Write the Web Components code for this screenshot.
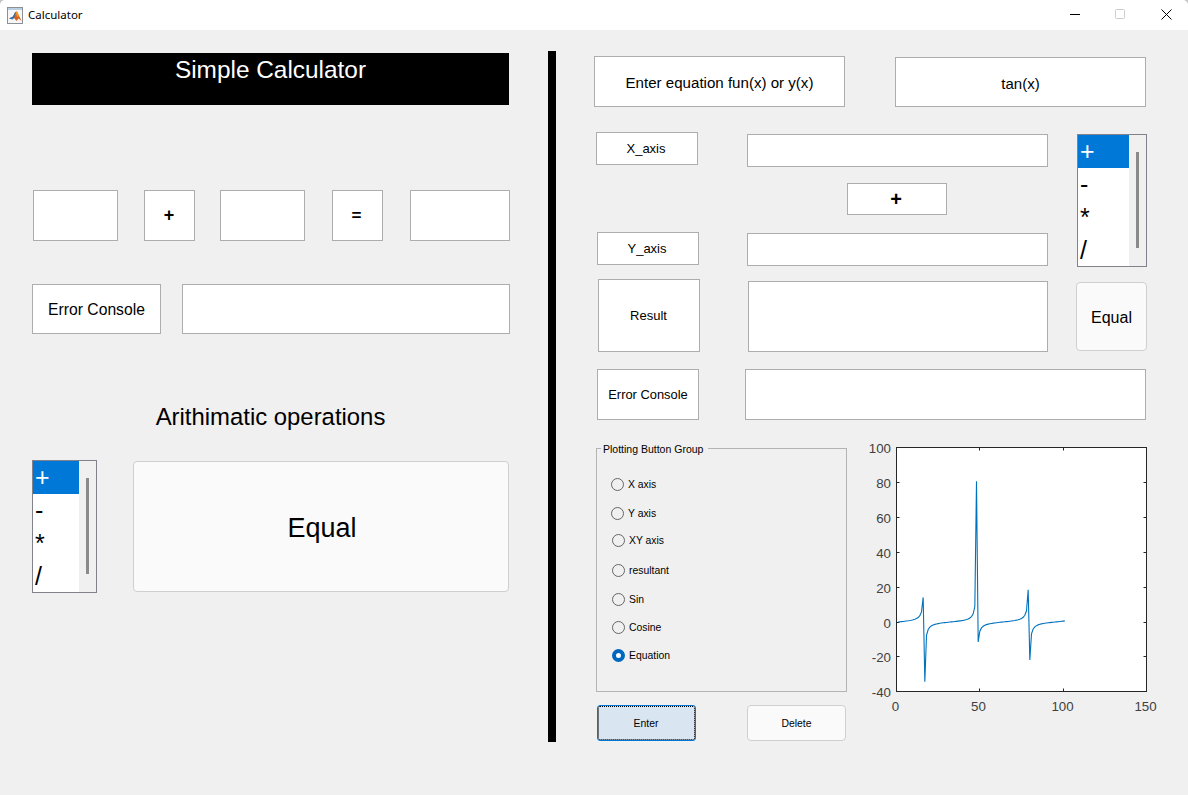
<!DOCTYPE html>
<html>
<head>
<meta charset="utf-8">
<title>Calculator</title>
<style>
  html { background: #c4c4c4; }
  body { margin: 0; font-family: "Liberation Sans", Arial, sans-serif; color: #000; }
</style>
</head>
<body>
<calc-window></calc-window>

<script>
// text box / edit field
class MlBox extends HTMLElement {
  constructor() {
    super();
    this.attachShadow({ mode: 'open' });
    this.shadowRoot.innerHTML = `
      <style>
        :host {
          display: flex;
          align-items: center;
          justify-content: center;
          box-sizing: border-box;
          flex: none;
          background: #fff;
          border: 1px solid #adadad;
          font-size: 16px;
          white-space: nowrap;
        }
      </style>
      <slot></slot>`;
  }
}

class MlButton extends HTMLElement {
  constructor() {
    super();
    this.attachShadow({ mode: 'open' });
    this.shadowRoot.innerHTML = `
      <style>
        :host {
          display: flex;
          align-items: center;
          justify-content: center;
          box-sizing: border-box;
          flex: none;
          position: relative;
          background: #fafafa;
          border: 1px solid #cfcfcf;
          border-radius: 4px;
          font-size: 16px;
        }
        :host([focused]) {
          background: #d9e6f2;
          border: 1px solid #0078d7;
          border-radius: 3px;
        }
        .dots { display: none; }
        :host([focused]) .dots {
          display: block;
          position: absolute;
          inset: 0;
          border: 1px dotted #000;
          border-radius: 2px;
        }
      </style>
      <span class="dots"></span>
      <slot></slot>`;
  }
}

class MlList extends HTMLElement {
  constructor() {
    super();
    this.attachShadow({ mode: 'open' });
    this.shadowRoot.innerHTML = `
      <style>
        :host {
          display: flex;
          box-sizing: border-box;
          flex: none;
          height: 133px;
          background: #fff;
          border: 1px solid #82828c;
          overflow: hidden;
        }
        .items { flex: 1; font-size: 25px; line-height: 33px; }
        .items div { height: 33px; padding-left: 2px; }
        .items .sel { background: #0078d7; color: #fff; }
        .bar {
          flex: none;
          width: 17px;
          background: #f0f0f0;
          display: flex;
          justify-content: center;
          padding-top: 17px;
        }
        .thumb { width: 3px; height: 96px; background: #8a8a8a; }
      </style>
      <div class="items">
        <div class="sel">+</div>
        <div>-</div>
        <div>*</div>
        <div>/</div>
      </div>
      <div class="bar"><div class="thumb"></div></div>`;
  }
}

class MlRadio extends HTMLElement {
  constructor() {
    super();
    this.attachShadow({ mode: 'open' });
    this.shadowRoot.innerHTML = `
      <style>
        :host {
          display: flex;
          align-items: center;
          height: 13px;
          font-size: 10.4px;
          white-space: nowrap;
        }
        .dot {
          box-sizing: border-box;
          flex: none;
          width: 13px;
          height: 13px;
          margin-right: 4px;
          border: 1px solid #666;
          border-radius: 50%;
          background: #f0f0f0;
        }
        :host([checked]) .dot {
          border: 4px solid #0067c0;
          background: #fff;
        }
      </style>
      <span class="dot"></span><slot></slot>`;
  }
}

class MlGroup extends HTMLElement {
  constructor() {
    super();
    this.attachShadow({ mode: 'open' });
    this.shadowRoot.innerHTML = `
      <style>
        :host {
          display: flex;
          flex-direction: column;
          box-sizing: border-box;
          position: relative;
          width: 251px;
          height: 244px;
          border: 1px solid #b4b4b4;
          padding: 29px 0 0 14px;
        }
        .legend {
          position: absolute;
          left: 4px;
          top: -6px;
          padding: 0 5px 0 2px;
          background: #f0f0f0;
          font-size: 10.5px;
          line-height: 13px;
          white-space: nowrap;
        }
      </style>
      <div class="legend"><slot name="legend"></slot></div>
      <slot></slot>`;
  }
}

// the axes, same data as the figure: tan(x) for x = 0:0.1:10 against its index
class MlPlot extends HTMLElement {
  constructor() {
    super();
    this.attachShadow({ mode: 'open' });
    const L = 896.5, R = 1146.5, T = 447.5, B = 691.5;
    const sx = v => L + (v / 150) * (R - L);
    const sy = v => T + (100 - v) * 1.745;

    let pts = [];
    for (let i = 1; i <= 101; i++) {
      pts.push(sx(i).toFixed(2) + ',' + sy(Math.tan((i - 1) * 0.1)).toFixed(2));
    }

    let marks = '';
    let labels = '';
    [0, 50, 100, 150].forEach(v => {
      const x = Math.round(sx(v) - 0.5) + 0.5;
      marks += `M${x} ${B}V${B - 3}M${x} ${T}V${T + 3}`;
      labels += `<text x="${x - 1}" y="711" text-anchor="middle">${v}</text>`;
    });
    [-40, -20, 0, 20, 40, 60, 80, 100].forEach(v => {
      const y = Math.round(sy(v) - 0.5) + 0.5;
      marks += `M${L} ${y}H${L + 3}M${R} ${y}H${R - 3}`;
      labels += `<text x="891" y="${y + 5}" text-anchor="end">${v}</text>`;
    });

    this.shadowRoot.innerHTML = `
      <style>
        :host { display: block; flex: none; width: 310px; height: 285px; }
        svg { display: block; overflow: visible; }
        text { font-family: "Liberation Sans", Arial, sans-serif; font-size: 13.3px; fill: #404040; }
      </style>
      <svg width="310" height="285" viewBox="860 435 310 285">
        <rect x="${L}" y="${T}" width="${R - L}" height="${B - T}" fill="#fff" stroke="#262626"/>
        <path d="${marks}" stroke="#262626" fill="none"/>
        <polyline points="${pts.join(' ')}" fill="none" stroke="#0072bd" stroke-width="1.1"/>
        ${labels}
      </svg>`;
  }
}

class TitleBar extends HTMLElement {
  constructor() {
    super();
    this.attachShadow({ mode: 'open' });
    this.shadowRoot.innerHTML = `
      <style>
        :host {
          display: flex;
          align-items: center;
          height: 30px;
          background: #fff;
          border-radius: 5px 5px 0 0;
          padding-left: 7px;
          font-family: "Noto Sans", "Open Sans", sans-serif;
          font-size: 11.5px;
        }
        .logo { flex: none; margin-right: 5px; }
        .name { flex: 1; padding-bottom: 2px; }
        .ctl { flex: none; display: block; width: 46px; height: 30px; }
      </style>
      <svg class="logo" width="16" height="17" viewBox="0 0 16 17">
        <rect x="0.5" y="0.5" width="15" height="16" fill="#f4f6f8" stroke="#8c8f94"/>
        <rect x="1" y="1" width="14" height="2" fill="#b9cfe4"/>
        <path d="M2 11.5 6 9.5 8.2 5 10 4.5 14.5 14 11.5 11.5 9.5 14 7 11Z" fill="#d9601a"/>
        <path d="M2 11.5 6 9.5 8.2 5 7.5 10.5 5.5 12.5Z" fill="#2f6fae"/>
        <path d="M9 5 10 4.5 12 9 10 10Z" fill="#f0a020"/>
      </svg>
      <span class="name">Calculator</span>
      <svg class="ctl" viewBox="0 0 46 30"><path d="M11 14.5H21" stroke="#000" fill="none"/></svg>
      <svg class="ctl" viewBox="0 0 46 30"><rect x="10.5" y="9.5" width="9" height="9" rx="1" stroke="#ccc" fill="none"/></svg>
      <svg class="ctl" style="width:37px" viewBox="0 0 37 30"><path d="M10.5 9.5 20.5 19.5M20.5 9.5 10.5 19.5" stroke="#000" fill="none"/></svg>`;
  }
}

class SimplePanel extends HTMLElement {
  constructor() {
    super();
    this.attachShadow({ mode: 'open' });
    this.shadowRoot.innerHTML = `
      <style>
        :host { display: block; flex: none; width: 478px; }
        .banner {
          width: 477px;
          height: 52px;
          margin-top: 23px;
          box-sizing: border-box;
          padding-top: 3px;
          background: #000;
          color: #fff;
          font-size: 24.4px;
          line-height: 27px;
          text-align: center;
        }
        .row { display: flex; align-items: flex-start; }
        .ops { margin-top: 85px; }
        .err { margin-top: 43px; }
        h2 {
          margin: 69px 0 0;
          font-weight: normal;
          font-size: 23.9px;
          line-height: 28px;
          text-align: center;
          width: 477px;
        }
        .bottom { margin-top: 29px; }
      </style>
      <div class="banner">Simple Calculator</div>
      <div class="row ops">
        <ml-box style="width:85px;height:51px;margin-left:1px"></ml-box>
        <ml-box style="width:51px;height:51px;margin-left:26px;padding-right:1px;font-size:18px;font-weight:bold">+</ml-box>
        <ml-box style="width:85px;height:51px;margin-left:25px"></ml-box>
        <ml-box style="width:51px;height:51px;margin-left:27px;padding:1px 2px 0 0;font-size:17px;font-weight:bold">=</ml-box>
        <ml-box style="width:100px;height:51px;margin-left:27px"></ml-box>
      </div>
      <div class="row err">
        <ml-box style="width:129px;height:50px;padding-top:2px;font-size:15.7px">Error Console</ml-box>
        <ml-box style="width:328px;height:50px;margin-left:21px"></ml-box>
      </div>
      <h2>Arithimatic operations</h2>
      <div class="row bottom">
        <ml-list style="width:65px"></ml-list>
        <ml-button style="width:376px;height:131px;margin:1px 0 0 36px;padding:4px 0 0 2px;font-size:27px">Equal</ml-button>
      </div>`;
  }
}

class PlotPanel extends HTMLElement {
  constructor() {
    super();
    this.attachShadow({ mode: 'open' });
    this.shadowRoot.innerHTML = `
      <style>
        :host { display: block; flex: none; width: 553px; }
        .row { display: flex; align-items: flex-start; }
        .eq { margin-top: 26px; }
        .axes { margin-top: 25px; }
        .axes-fields { width: 483px; flex: none; }
        .res { margin-top: 12px; }
        .err { margin-top: 17px; }
        .plots { margin-top: 15px; }
        .group-col { flex: none; width: 266px; padding-top: 13px; }
        .btns { margin-top: 13px; }
      </style>
      <div class="row eq">
        <ml-box style="width:251px;height:51px;padding-top:2px;font-size:15.1px">Enter equation fun(x) or y(x)</ml-box>
        <ml-box style="width:251px;height:50px;margin:1px 0 0 50px;padding-top:2px;font-size:15px">tan(x)</ml-box>
      </div>
      <div class="row axes">
        <div class="axes-fields">
          <div class="row">
            <ml-box style="width:102px;height:33px;margin-left:2px;padding-right:2px;font-size:13px">X_axis</ml-box>
            <ml-box style="width:301px;height:33px;margin:2px 0 0 49px"></ml-box>
          </div>
          <ml-box style="width:100px;height:32px;margin:16px 0 0 253px;padding:1px 2px 0 0;font-size:20px;font-weight:bold">+</ml-box>
          <div class="row" style="margin-top:17px">
            <ml-box style="width:102px;height:33px;margin-left:3px;padding-right:2px;font-size:13px">Y_axis</ml-box>
            <ml-box style="width:301px;height:33px;margin:1px 0 0 48px"></ml-box>
          </div>
        </div>
        <ml-list style="width:70px;margin-top:2px"></ml-list>
      </div>
      <div class="row res">
        <ml-box style="width:102px;height:73px;margin-left:4px;padding-right:1px;font-size:13px">Result</ml-box>
        <ml-box style="width:300px;height:71px;margin:2px 0 0 48px"></ml-box>
        <ml-button style="width:71px;height:69px;margin:3px 0 0 28px;padding-top:2px">Equal</ml-button>
      </div>
      <div class="row err">
        <ml-box style="width:102px;height:51px;margin-left:3px;font-size:12.9px">Error Console</ml-box>
        <ml-box style="width:401px;height:51px;margin-left:46px"></ml-box>
      </div>
      <div class="row plots">
        <div class="group-col">
          <ml-group style="margin-left:2px">
            <span slot="legend">Plotting Button Group</span>
            <ml-radio>X axis</ml-radio>
            <ml-radio style="margin-top:16px">Y axis</ml-radio>
            <ml-radio style="margin:14px 0 0 1px">XY axis</ml-radio>
            <ml-radio style="margin:17px 0 0 1px">resultant</ml-radio>
            <ml-radio style="margin:16px 0 0 1px">Sin</ml-radio>
            <ml-radio style="margin:15px 0 0 1px">Cosine</ml-radio>
            <ml-radio style="margin:15px 0 0 1px" checked>Equation</ml-radio>
          </ml-group>
          <div class="row btns">
            <ml-button focused style="width:99px;height:36px;margin-left:3px;padding:1px 1px 0 0;font-size:10.4px">Enter</ml-button>
            <ml-button style="width:99px;height:36px;margin-left:51px;padding-top:1px;font-size:10.4px">Delete</ml-button>
          </div>
        </div>
        <ml-plot></ml-plot>
      </div>`;
  }
}

class CalcWindow extends HTMLElement {
  constructor() {
    super();
    this.attachShadow({ mode: 'open' });
    this.shadowRoot.innerHTML = `
      <style>
        :host { display: block; width: 1188px; height: 795px; overflow: hidden; }
        .body {
          display: flex;
          align-items: flex-start;
          height: 765px;
          padding-left: 32px;
          box-sizing: border-box;
          background: #f0f0f0;
        }
        .divider {
          flex: none;
          width: 8px;
          height: 691px;
          margin: 21px 38px 0 38px;
          background: #000;
        }
      </style>
      <title-bar></title-bar>
      <div class="body">
        <simple-panel></simple-panel>
        <div class="divider"></div>
        <plot-panel></plot-panel>
      </div>`;
  }
}

window.customElements.define('ml-box', MlBox);
window.customElements.define('ml-button', MlButton);
window.customElements.define('ml-list', MlList);
window.customElements.define('ml-radio', MlRadio);
window.customElements.define('ml-group', MlGroup);
window.customElements.define('ml-plot', MlPlot);
window.customElements.define('title-bar', TitleBar);
window.customElements.define('simple-panel', SimplePanel);
window.customElements.define('plot-panel', PlotPanel);
window.customElements.define('calc-window', CalcWindow);
</script>
</body>
</html>
